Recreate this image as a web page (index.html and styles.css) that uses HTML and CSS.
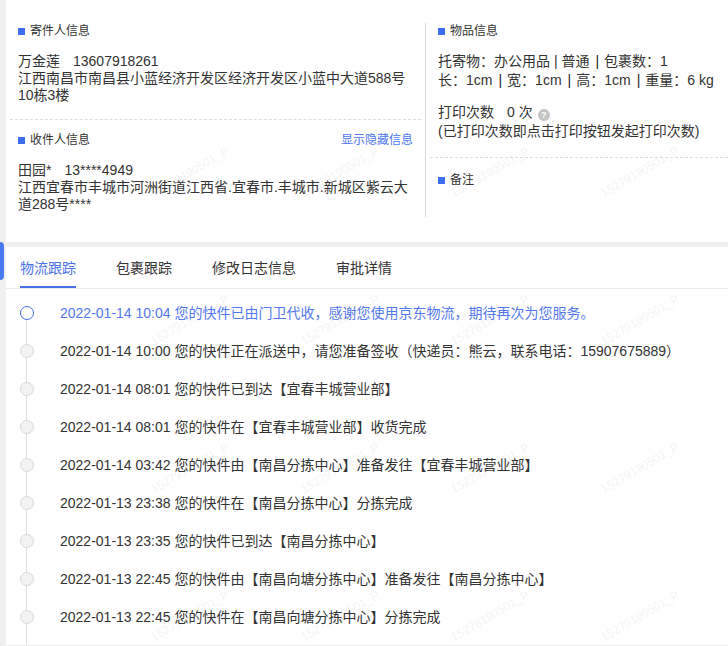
FILE: index.html
```html
<!DOCTYPE html>
<html lang="zh-CN">

<head>
    <meta charset="utf-8">
    <meta name="viewport" content="width=device-width, initial-scale=1.0">
    <title>运单详情</title>
    <link rel="stylesheet" href="styles.css">
</head>

<body>
    <div class="page">
        <section class="info-panel">
            <div class="info-col col-left">
                <div class="block block-sender">
                    <h3 class="block-title">寄件人信息</h3>
                    <p class="person"><span>万金莲</span><span class="phone">13607918261</span></p>
                    <p class="addr">江西南昌市南昌县小蓝经济开发区经济开发区小蓝中大道588号10栋3楼</p>
                </div>
                <div class="block block-receiver">
                    <div class="block-head">
                        <h3 class="block-title">收件人信息</h3>
                        <a class="link" href="#">显示隐藏信息</a>
                    </div>
                    <p class="person"><span>田园*</span><span class="phone">13****4949</span></p>
                    <p class="addr">江西宜春市丰城市河洲街道江西省.宜春市.丰城市.新城区紫云大道288号****</p>
                </div>
            </div>
            <div class="info-col col-right">
                <div class="block block-goods">
                    <h3 class="block-title">物品信息</h3>
                    <div class="goods">
                        <p>托寄物：办公用品 | 普通<span class="bar">|</span>包裹数：1</p>
                        <p>长：1cm<span class="bar">|</span>宽：1cm<span class="bar">|</span>高：1cm<span class="bar">|</span>重量：6 kg</p>
                    </div>
                    <div class="print">
                        <p><span class="print-label">打印次数</span>0 次<span class="help">?</span></p>
                        <p>(已打印次数即点击打印按钮发起打印次数)</p>
                    </div>
                </div>
                <div class="block block-remark">
                    <h3 class="block-title">备注</h3>
                </div>
            </div>
        </section>

        <section class="track-panel">
            <nav class="tabs">
                <a class="tab active" href="#">物流跟踪</a>
                <a class="tab" href="#">包裹跟踪</a>
                <a class="tab" href="#">修改日志信息</a>
                <a class="tab" href="#">审批详情</a>
            </nav>
            <ul class="timeline">
                <li class="step current"><span class="dot"></span><span class="text">2022-01-14 10:04 您的快件已由门卫代收，感谢您使用京东物流，期待再次为您服务。</span></li>
                <li class="step"><span class="dot"></span><span class="text">2022-01-14 10:00 您的快件正在派送中，请您准备签收（快递员：熊云，联系电话：15907675889）</span></li>
                <li class="step"><span class="dot"></span><span class="text">2022-01-14 08:01 您的快件已到达【宜春丰城营业部】</span></li>
                <li class="step"><span class="dot"></span><span class="text">2022-01-14 08:01 您的快件在【宜春丰城营业部】收货完成</span></li>
                <li class="step"><span class="dot"></span><span class="text">2022-01-14 03:42 您的快件由【南昌分拣中心】准备发往【宜春丰城营业部】</span></li>
                <li class="step"><span class="dot"></span><span class="text">2022-01-13 23:38 您的快件在【南昌分拣中心】分拣完成</span></li>
                <li class="step"><span class="dot"></span><span class="text">2022-01-13 23:35 您的快件已到达【南昌分拣中心】</span></li>
                <li class="step"><span class="dot"></span><span class="text">2022-01-13 22:45 您的快件由【南昌向塘分拣中心】准备发往【南昌分拣中心】</span></li>
                <li class="step"><span class="dot"></span><span class="text">2022-01-13 22:45 您的快件在【南昌向塘分拣中心】分拣完成</span></li>
            </ul>
        </section>
    </div>

    <div class="side-handle"></div>

    <div class="watermark">
        <span>15279190501_P</span><span>15279190501_P</span><span>15279190501_P</span><span>15279190501_P</span>
        <span>15279190501_P</span><span>15279190501_P</span><span>15279190501_P</span><span>15279190501_P</span>
        <span>15279190501_P</span><span>15279190501_P</span><span>15279190501_P</span><span>15279190501_P</span>
        <span>15279190501_P</span><span>15279190501_P</span><span>15279190501_P</span><span>15279190501_P</span>
    </div>
</body>

</html>
```

FILE: styles.css
```css
* {
    margin: 0;
    padding: 0;
    box-sizing: border-box;
}

body {
    background-color: #f0f0f0;
    font-family: "Liberation Sans", "Noto Sans CJK SC", sans-serif;
    font-size: 14px;
    color: #333;
    overflow: hidden;
}

.page {
    margin-left: 6px;
}

/* top info */
.info-panel {
    display: flex;
    background-color: #fff;
    padding: 23px 0 25px;
}

.info-col {
    display: flex;
    flex-direction: column;
}

.col-left {
    width: 420px;
    padding: 0 4px;
    border-right: 1px solid #dcdcdc;
}

.col-right {
    flex: 1;
    padding-left: 4px;
}

.block {
    padding: 0 8px;
}

.block-title {
    display: flex;
    align-items: center;
    font-size: 12px;
    line-height: 17px;
    font-weight: normal;
    color: #333;
}

.block-title::before {
    content: "";
    width: 7px;
    height: 7px;
    margin-right: 5px;
    background-color: #3d6df2;
}

.block-head {
    display: flex;
    justify-content: space-between;
    align-items: center;
}

.link {
    font-size: 12px;
    line-height: 17px;
    color: #4f78f2;
    text-decoration: none;
}

.person {
    margin-top: 12px;
    line-height: 18px;
}

.phone {
    margin-left: 13px;
}

.addr {
    line-height: 17px;
}

.block-sender {
    padding-bottom: 15px;
    border-bottom: 1px dashed #dddddd;
}

.block-receiver {
    padding-top: 12px;
    padding-bottom: 4px;
}

.block-goods {
    padding-bottom: 16px;
    border-bottom: 1px dashed #dddddd;
}

.goods,
.print {
    line-height: 19px;
}

.goods {
    margin-top: 12px;
}

.print {
    margin-top: 13px;
}

.bar {
    margin: 0 5px 0 6px;
    color: #222;
}

.print-label {
    margin-right: 13px;
}

.help {
    display: inline-flex;
    justify-content: center;
    align-items: center;
    width: 12px;
    height: 12px;
    margin-left: 5px;
    border-radius: 50%;
    background-color: #c4c4c4;
    color: #fff;
    font-size: 9px;
    font-weight: bold;
    line-height: 12px;
    vertical-align: -1px;
}

.block-remark {
    padding-top: 14px;
}

/* tracking */
.track-panel {
    margin-top: 5px;
    background-color: #fff;
}

.tabs {
    display: flex;
    gap: 40px;
    padding-left: 14px;
    border-bottom: 1px solid #ebebeb;
}

.tab {
    padding: 11px 0 8px;
    line-height: 20px;
    font-size: 14px;
    color: #333;
    text-decoration: none;
    border-bottom: 2px solid transparent;
}

.tab.active {
    color: #4a6fe6;
    border-bottom-color: #4a6fe6;
}

.timeline {
    list-style: none;
    padding: 5px 0 9px;
}

.step {
    position: relative;
    display: flex;
    align-items: center;
    height: 38px;
}

.step::before {
    content: "";
    position: absolute;
    left: 20px;
    top: 50%;
    width: 1px;
    height: 100%;
    background-color: #e0e0e0;
}

.dot {
    position: relative;
    z-index: 1;
    width: 14px;
    height: 14px;
    margin-left: 14px;
    border: 1px solid #d9d9d9;
    border-radius: 50%;
    background-color: #f3f3f3;
}

.step.current .dot {
    border: 1.5px solid #4a70e8;
    background-color: #fff;
}

.text {
    margin-left: 26px;
    line-height: 20px;
    white-space: nowrap;
}

.step.current .text {
    color: #5478ee;
}

.side-handle {
    position: absolute;
    left: 0;
    top: 242px;
    width: 4px;
    height: 38px;
    border-radius: 0 4px 4px 0;
    background-color: #4a7af2;
}

.watermark {
    position: fixed;
    left: 115px;
    top: 98px;
    display: grid;
    grid-template-columns: repeat(4, 150px);
    grid-auto-rows: 148px;
    pointer-events: none;
    z-index: 5;
}

.watermark span {
    display: flex;
    justify-content: center;
    align-items: center;
    font-size: 12px;
    color: rgba(0, 0, 0, 0.05);
    transform: rotate(-30deg);
}
```
